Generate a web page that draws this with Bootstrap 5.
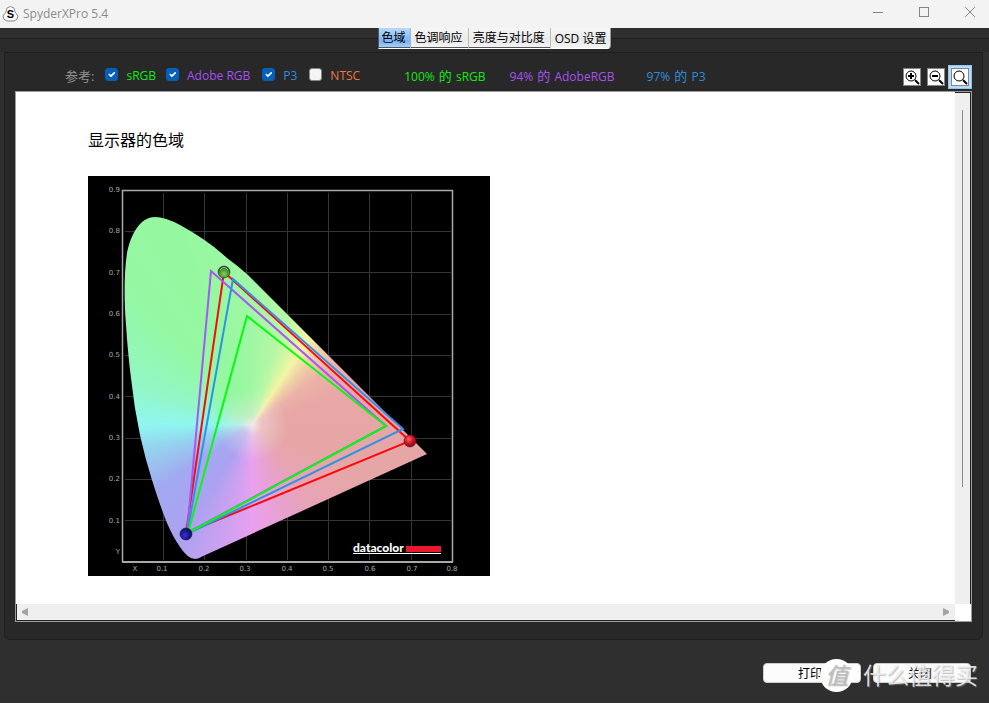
<!DOCTYPE html>
<html lang="zh-CN">
<head>
<meta charset="utf-8">
<meta name="viewport" content="width=device-width, initial-scale=1">
<title>SpyderXPro 5.4</title>
<link href="https://cdn.jsdelivr.net/npm/bootstrap@5.3.0/dist/css/bootstrap.min.css" rel="stylesheet">
<style>
body { background: #2f2f2f; font: 12px/16px "Open Sans", "Noto Sans CJK SC", sans-serif; color: #000; }
button { font: inherit; }
.titlebar { height: 28px; background: #f3f3f3; color: #8b8b8b; padding-left: 2px; padding-right: 12px; }
.win-btn { width: 14px; height: 14px; color: #858585; }
.win-group { gap: 32px; }
.tab-strip { height: 24px; background: linear-gradient(#2f2f2f 10px, #202020 10px, #202020 11px, #2a2a2a 11px); }
.tab-set { height: 21px; }
.tab-btn { padding: 0 5px 0 4px; background: linear-gradient(#f6f6f6, #e9e9ea 60%, #f4f4f4); border: 0; border-right: 1px solid #bdbdbd; border-bottom: 1px solid #fff; box-shadow: inset 0 -1px #555; line-height: 18px; color: #000; }
.tab-btn.active { padding: 0 4px 0 3px; background: linear-gradient(#b9d9fb, #79b3f4 65%, #a8d4fc); border-right-color: #9cb6d2; border-left: 1px solid #4a5a6c; }
.tab-btn:last-child { padding: 1px 4px 0; border-right: 1px solid #999; border-radius: 0 0 4px 0; box-shadow: none; }
.panel { margin: 0 6px 0 4px; padding: 0 10px 17px; background: #282828; border: 1px solid #1e1e1e; border-radius: 0 0 6px 6px; }
.tools { height: 38px; padding-left: 50px; }
.refs { color: #919191; padding-top: 8px; }
.refs label { padding-left: 8px; }
.ref-title { font-size: 13px; margin-right: 11px; }
.opt { margin-right: 12px; }
.opt-first { margin-right: 10px; }
.of { font-size: 13px; margin: 0 1px; }
.form-check-input.tick { width: 13px; height: 13px; margin: 0 0 4px; border: 1px solid #898989; border-radius: 3px; background-color: #f4f4f4; }
.form-check-input.tick:checked { background-color: #0560bb; border-color: #0560bb; background-size: 11px; }
.c-srgb { color: #12e912; } .c-adobe { color: #a652f0; } .c-p3 { color: #318cd8; } .c-ntsc { color: #e87743; }
.results { gap: 24px; margin-left: 32px; }
.results .c-p3 { margin-left: 8px; }
.zoom-group { gap: 6px; padding: 9px 1px 0 0; }
.zoom-btn { width: 18px; height: 18px; padding: 0; border: 1px solid #858585; background: #fff; }
.zoom-btn.active { box-shadow: 0 0 0 2px #b7dcfb, 0 0 0 3px #91c5f0; margin: 0 2px 0 0; }
.zoom-btn svg, .win-btn svg { display: block; width: 100%; height: 100%; }
.viewer { display: grid; grid-template-columns: minmax(0, 1fr) 16px; grid-template-rows: minmax(0, 1fr) 17px; background: #fff; border: 1px solid #9c9c9c; }
.sheet { padding: 38px 72px 28px; }
.sheet h1 { font-size: 16px; line-height: 20px; margin: 0 0 26px; font-weight: 400; }
.gamut { display: block; width: 402px; max-width: 100%; height: auto; }
.vbar { background: #efefef; border-top: 1px solid #252525; border-right: 1px solid #252525; padding: 17px 7px 117px 7px; }
.vthumb { background: #8a8a8a; width: 1px; height: 100%; }
.hbar { background: #efefef; border-bottom: 1px solid #252525; border-left: 1px solid #252525; padding: 0 5px; }
.gamut text { font: 7px "DejaVu Sans", sans-serif; fill: #a8a8a8; }
.gamut .logo-text { font: 900 12px Lato, sans-serif; fill: #fff; }
.hue { width: 402px; height: 400px; background: radial-gradient(circle at 164px 249px, #f0ebea 0, #f0e6e677 10px, #f0e6e600 36px), conic-gradient(from 0deg at 164px 249px, #a0f7a5 0deg, #b8f7a5 18deg, #f2f5a4 33deg, #efcda7 43deg, #ebb2a7 54deg, #e8a6a6 72deg, #e6a6a6 115deg, #e7a4b4 140deg, #e8a2cc 160deg, #e9a0f0 180deg, #aba2f1 212deg, #a2a9f1 236deg, #94d5ef 258deg, #90f6f0 270deg, #92f7c8 288deg, #94f8a3 318deg, #95f8a0 340deg, #a0f7a5 360deg); }
.footer-bar { height: 63px; padding: 23px 18px 0; gap: 12px; border-bottom: 1px solid #332e30; }
.act { width: 98px; height: 20px; border: 1px solid #cfcfcf; border-radius: 4px; background: #fcfcfc; padding: 0 4px 0 0; line-height: 17px; color: #000; }
.stamp { right: 11px; bottom: 11px; gap: 10px; color: #eeeeeee6; pointer-events: none; font-size: 23px; line-height: 32px; text-shadow: 1px 1px 1px #8888; }
.stamp-dot { width: 33px; height: 33px; background: #fff; border-radius: 50%; color: #bdbdbd; text-align: center; font-style: italic; }
</style>
<script src="https://cdn.jsdelivr.net/npm/bootstrap@5.3.0/dist/js/bootstrap.bundle.min.js"></script>
</head>
<body>
<div class="d-flex flex-column min-vh-100 position-relative">
  <header class="titlebar d-flex align-items-center justify-content-between">
    <div class="d-flex align-items-center gap-1">
      <svg width="17" height="17" viewBox="0 0 17 17" aria-hidden="true"><path d="M5 2Q8.500 -1 12 2L13 6L16 10Q16 14 12 15H5Q1 14 1 10L4 6Z" fill="#fff" stroke="#8a8a8a"/><text x="8.500" y="12" text-anchor="middle" font-family="Liberation Sans" font-size="11" font-weight="700">S</text></svg>
      <span>SpyderXPro 5.4</span>
    </div>
    <div class="d-flex win-group">
      <button class="win-btn btn p-0 border-0" aria-label="最小化"><svg viewBox="0 0 14 14"><path d="M2 5.500H12" stroke="currentColor"/></svg></button>
      <button class="win-btn btn p-0 border-0" aria-label="最大化"><svg viewBox="0 0 14 14"><rect x="2.500" y="0.500" width="9" height="9" fill="none" stroke="currentColor"/></svg></button>
      <button class="win-btn btn p-0 border-0" aria-label="关闭窗口"><svg viewBox="0 0 14 14"><path d="M2 0L12 10M12 0L2 10" stroke="currentColor"/></svg></button>
    </div>
  </header>
  <nav class="tab-strip d-flex justify-content-center">
    <div class="tab-set d-flex" role="tablist">
      <button class="tab-btn active" role="tab" aria-selected="true">色域</button>
      <button class="tab-btn" role="tab">色调响应</button>
      <button class="tab-btn" role="tab">亮度与对比度</button>
      <button class="tab-btn" role="tab">OSD 设置</button>
    </div>
  </nav>
  <main class="panel flex-grow-1 d-flex flex-column">
    <div class="tools d-flex justify-content-between">
      <div class="refs d-flex align-items-center">
        <span class="ref-title">参考:</span>
        <div class="opt-first d-flex align-items-center"><input class="form-check-input tick" type="checkbox" id="srgb" checked><label class="c-srgb" for="srgb">sRGB</label></div>
        <div class="opt d-flex align-items-center"><input class="form-check-input tick" type="checkbox" id="adobe" checked><label class="c-adobe" for="adobe">Adobe RGB</label></div>
        <div class="opt d-flex align-items-center"><input class="form-check-input tick" type="checkbox" id="p3" checked><label class="c-p3" for="p3">P3</label></div>
        <div class="opt d-flex align-items-center"><input class="form-check-input tick" type="checkbox" id="ntsc"><label class="c-ntsc" for="ntsc">NTSC</label></div>
        <div class="results d-flex"><span class="c-srgb">100% <span class="of">的</span> sRGB</span><span class="c-adobe">94% <span class="of">的</span> AdobeRGB</span><span class="c-p3">97% <span class="of">的</span> P3</span></div>
      </div>
      <div class="zoom-group d-flex align-items-center">
        <button class="zoom-btn" aria-label="放大"><svg viewBox="0 0 16 16" fill="none" stroke="#000"><circle cx="7" cy="7" r="5"/><path d="M4 7H10M7 4V10" stroke-width="2"/><path d="M11 11L15 15" stroke-width="2"/></svg></button>
        <button class="zoom-btn" aria-label="缩小"><svg viewBox="0 0 16 16" fill="none" stroke="#000"><circle cx="7" cy="7" r="5"/><path d="M4 7H10" stroke-width="2"/><path d="M11 11L15 15" stroke-width="2"/></svg></button>
        <button class="zoom-btn active" aria-label="实际大小"><svg viewBox="0 0 16 16" fill="none" stroke="#000"><circle cx="7" cy="7" r="5"/><path d="M11 11L15 15" stroke-width="2"/></svg></button>
      </div>
    </div>
    <section class="viewer flex-grow-1">
      <div class="sheet">
        <h1>显示器的色域</h1>
        <svg class="gamut" viewBox="88 176 402 400" role="img" aria-label="显示器的色域">
          <defs>
            <clipPath id="locus"><path d="M155 217C140 217 131 234 127 253C124 273 124 300 126 325Q128 355 131 378Q134 407 140 435Q145 458 152 480Q159 503 167 523Q173 537 180 547Q188 559 195 559Q198 559 201 557L427 454L281 308L248 275Q238 266 227 258Q215 247 203 239Q191 231 180 225Q165 217 155 217Z"/></clipPath>
            <radialGradient id="gball" cx=".5" cy=".65" r=".6"><stop offset="0" stop-color="#8ccb58"/><stop offset=".6" stop-color="#479a32"/><stop offset="1" stop-color="#294b22"/></radialGradient>
            <radialGradient id="rball" cx=".4" cy=".35" r=".65"><stop offset="0" stop-color="#fb6970"/><stop offset=".5" stop-color="#d81828"/><stop offset="1" stop-color="#790b15"/></radialGradient>
            <radialGradient id="bball" cx=".4" cy=".6" r=".6"><stop offset="0" stop-color="#3c31e8"/><stop offset=".5" stop-color="#201a9b"/><stop offset="1" stop-color="#111044"/></radialGradient>
          </defs>
          <rect x="88" y="176" width="402" height="400"/>
          <path d="M163.500 193V560M204.500 193V560M246.500 193V560M287.500 193V560M328.500 193V560M369.500 193V560M411.500 193V560M125 231.500H451M125 272.500H451M125 314.500H451M125 355.500H451M125 396.500H451M125 438.500H451M125 479.500H451M125 520.500H451" stroke="#343434"/>
          <g clip-path="url(#locus)"><foreignObject x="88" y="176" width="402" height="400"><div class="hue"></div></foreignObject></g>
          <path d="M122.500 562V190.500H452.500V562" fill="none" stroke="#aaa" stroke-width="1.500"/><path d="M122 562H453" stroke="#aaa" stroke-width="2"/>
          <g fill="none" stroke-width="2">
            <path d="M186 533L224 272L410 441Z" stroke="#f80b10"/>
            <path d="M187 533L211 271L386 426Z" stroke="#a657f4"/>
            <path d="M187 534L233 279L403 429Z" stroke="#3490e5"/>
            <path d="M188 533L247 316L386 426Z" stroke="#08f810"/>
          </g>
          <g stroke-opacity=".6"><circle cx="224" cy="272" r="6" fill="url(#gball)" stroke="#263f20"/><path d="M220 270Q224 265 228 270" fill="none" stroke="#dcebd0"/>
          <circle cx="410" cy="441" r="6" fill="url(#rball)" stroke="#6d1119"/><circle cx="186" cy="534" r="6" fill="url(#bball)" stroke="#15153d"/></g>
          <g text-anchor="end"><text x="120" y="192">0.9</text><text x="120" y="233">0.8</text><text x="120" y="275">0.7</text><text x="120" y="316">0.6</text><text x="120" y="357">0.5</text><text x="120" y="399">0.4</text><text x="120" y="440">0.3</text><text x="120" y="481">0.2</text><text x="120" y="523">0.1</text><text x="120" y="554">Y</text></g>
          <g text-anchor="middle"><text x="135" y="571">X</text><text x="162" y="571">0.1</text><text x="204" y="571">0.2</text><text x="245" y="571">0.3</text><text x="287" y="571">0.4</text><text x="328" y="571">0.5</text><text x="370" y="571">0.6</text><text x="412" y="571">0.7</text><text x="452" y="571">0.8</text></g>
          <text class="logo-text" x="353" y="552">datacolor</text>
          <rect x="406" y="546" width="35" height="6" fill="#ea1828"/><path d="M353 553.500H441" stroke="#fff"/>
        </svg>
      </div>
      <div class="vbar"><div class="vthumb"></div></div>
      <div class="hbar d-flex justify-content-between align-items-center">
        <svg width="7" height="8" viewBox="0 0 7 8" aria-hidden="true"><path d="M6 0V8L0 5V3Z" fill="#a3a3a3"/></svg>
        <svg width="7" height="8" viewBox="0 0 7 8" aria-hidden="true"><path d="M0 0V8L6 5V3Z" fill="#a3a3a3"/></svg>
      </div>
    </section>
  </main>
  <footer class="footer-bar d-flex justify-content-end">
    <button class="act">打印</button><button class="act">关闭</button>
  </footer>
  <div class="stamp position-absolute d-flex" aria-hidden="true"><span class="stamp-dot">值</span><span>什么值得买</span></div>
</div>
</body>
</html>
